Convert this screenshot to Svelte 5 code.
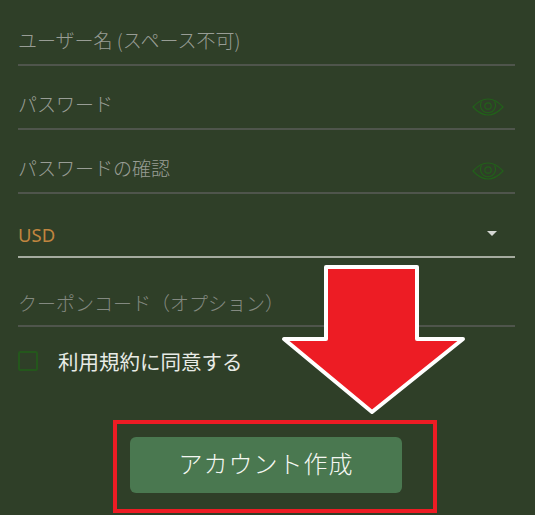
<script lang="ts">
const fields = [
  { label: 'ユーザー名 (スペース不可)', eye: false },
  { label: 'パスワード', eye: true },
  { label: 'パスワードの確認', eye: true }
];
</script>

{#snippet eye()}
  <svg class="eye" viewBox="0 0 32 18" aria-hidden="true">
    <path d="M1 9C6 3.500 10.500 1 16 1s10 2.500 15 8c-5 5.500-9.500 8-15 8S6 14.500 1 9Z" />
    <path d="M9.500 3.500a7.500 7.500 0 1 0 13 0" />
    <circle cx="16" cy="8" r="3.200" />
  </svg>
{/snippet}

<main class="page">
  <form class="form">
    {#each fields as f}
      <div class="field">
        <span class="ph">{f.label}</span>
        {#if f.eye}{@render eye()}{/if}
      </div>
    {/each}
    <div class="field select">
      <span class="value">USD</span>
      <span class="caret"></span>
    </div>
    <div class="field coupon">
      <span class="ph dim">クーポンコード（オプション）</span>
    </div>
    <div class="terms">
      <span class="box"></span>
      <span class="terms-text">利用規約に同意する</span>
    </div>
    <div class="submit-row">
      <button type="button" class="submit">アカウント作成</button>
    </div>
  </form>

  <!-- annotations drawn over the screenshot -->
  <div class="frame"></div>
  <svg class="arrow" viewBox="0 0 190 152" aria-hidden="true">
    <path d="M47 3H138V75H184L93 148 5 75H47Z" />
  </svg>
</main>

<style>
  :global(body) {
    margin: 0;
    background: #2f3f28;
  }
  .page {
    position: relative;
    width: 535px;
    height: 515px;
    overflow: hidden;
    background: #2f3f28;
    font-family: "Noto Sans CJK JP", "Noto Sans", sans-serif;
  }
  .form {
    display: flex;
    flex-direction: column;
    padding: 2px 20px 0 18px;
  }
  .field {
    display: flex;
    align-items: center;
    justify-content: space-between;
    height: 50px;
    padding-top: 12px;
    border-bottom: 2px solid #4f554c;
  }
  .ph {
    font-size: 19px;
    font-weight: 300;
    color: #989d95;
  }
  .ph.dim { color: #838980; }
  .eye {
    flex-shrink: 0;
    width: 32px;
    height: 18px;
    margin-right: 11px;
    margin-top: 7px;
    fill: none;
    stroke: #22601a;
    stroke-width: 1.200;
  }
  .select {
    height: 44px;
    padding-top: 18px;
    border-bottom-color: #a5ab9f;
  }
  .value {
    font-size: 18.500px;
    color: #c0853f;
    font-family: "Noto Sans", sans-serif;
  }
  .caret {
    width: 0;
    height: 0;
    margin-right: 18px;
    margin-bottom: 2px;
    border-left: 5px solid transparent;
    border-right: 5px solid transparent;
    border-top: 5px solid #d5d7d3;
  }
  .coupon {
    height: 45px;
    padding-top: 22px;
  }
  .terms {
    display: flex;
    align-items: center;
    gap: 20px;
    margin-top: 23px;
    height: 22px;
  }
  .box {
    width: 20px;
    height: 20px;
    box-sizing: border-box;
    border: 2px solid #24571c;
    border-radius: 2px;
    flex-shrink: 0;
  }
  .terms-text {
    font-size: 20.500px;
    font-weight: 400;
    color: #e8ebe6;
  }
  .submit-row {
    display: flex;
    margin-top: 65px;
    padding-left: 112px;
  }
  .submit {
    width: 272px;
    height: 56px;
    padding: 0 0 5px;
    border: 0;
    border-radius: 6px;
    background: #4a7850;
    color: #f4f7f2;
    font-family: inherit;
    font-size: 24px;
    font-weight: 300;
    letter-spacing: 1px;
  }
  .frame {
    position: absolute;
    left: 113px;
    top: 420px;
    width: 324px;
    height: 93px;
    box-sizing: border-box;
    border: 4px solid #ed1c24;
  }
  .arrow {
    position: absolute;
    left: 279px;
    top: 264px;
    width: 190px;
    height: 152px;
    fill: #ed1c24;
    stroke: #fff;
    stroke-width: 4;
    stroke-linejoin: round;
  }
</style>
